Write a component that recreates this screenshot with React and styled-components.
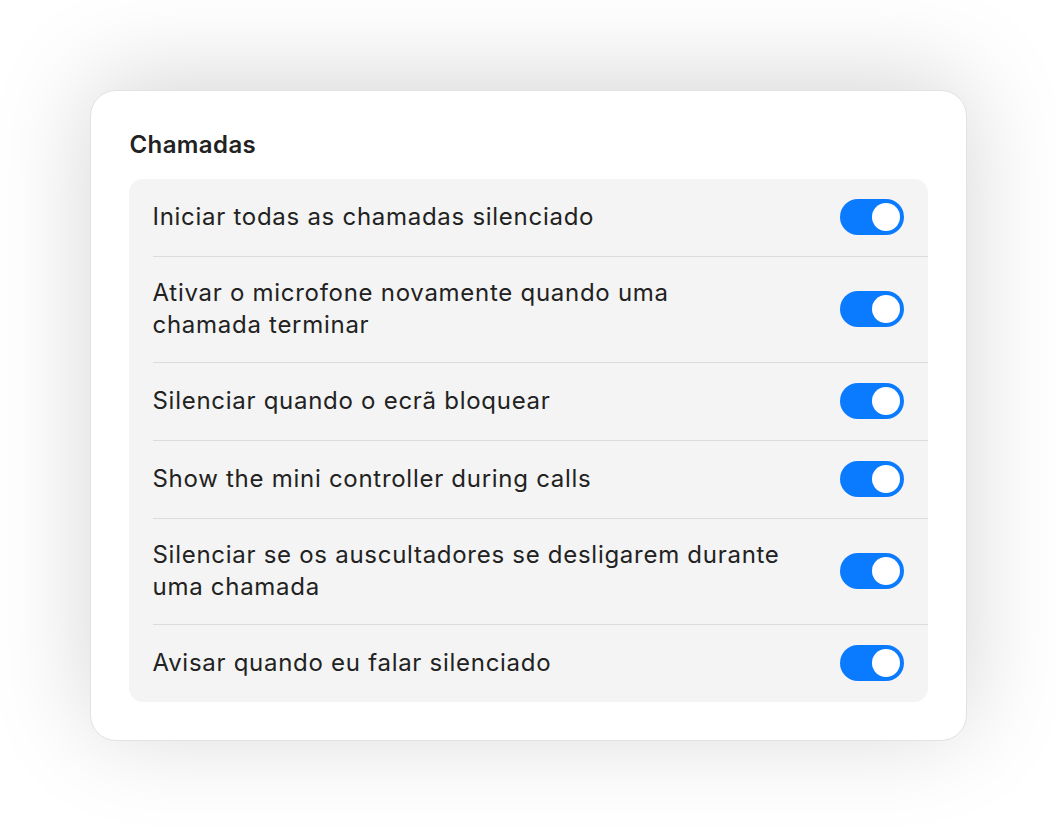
import styled, { createGlobalStyle } from "styled-components";

const Global = createGlobalStyle`
    html, body {
        margin:0;
        padding:0;
        background:#ffffff;
    }
    body {
        font-family: Inter, "Noto Sans", "Liberation Sans", sans-serif;
        -webkit-font-smoothing: antialiased;
    }
`;

const Page = styled.div`
    width:1056px;
    height:830px;
    display:flex;
    align-items:center;
    justify-content:center;
    overflow:hidden;
`;

const Card = styled.div`
    width:877px;
    box-sizing:border-box;
    padding:38px 38px 38px 38px;
    background:#ffffff;
    border:1px solid #e2e2e2;
    border-radius:26px;
    box-shadow: 0 -10px 100px rgba(0,0,0,0.17);
`;

const Title = styled.h2`
    margin:0 0 19px 1px;
    font-size:24px;
    line-height:31px;
    font-weight:600;
    letter-spacing:0.4px;
    color:#222222;
`;

const List = styled.div`
    background:#f4f4f4;
    border-radius:14px;
    display:flex;
    flex-direction:column;
`;

const Row = styled.div`
    margin-left:24px;
    padding:20.5px 24px 20.5px 0;
    display:flex;
    align-items:center;
    justify-content:space-between;
    gap:24px;
    border-top:${p => (p.$first ? "none" : "1px solid #dcdcdc")};
`;

const Label = styled.span`
    display:block;
    font-size:24px;
    line-height:32px;
    color:#222222;
    letter-spacing:0.72px;
`;

const Toggle = styled.div`
    flex:none;
    width:64px;
    height:36px;
    border-radius:18px;
    background:${p => (p.$on ? "#0a7aff" : "#d0d0d0")};
    display:flex;
    align-items:center;
    justify-content:${p => (p.$on ? "flex-end" : "flex-start")};
    padding:0 4px;
    box-sizing:border-box;

    &::after {
        content:"";
        width:28px;
        height:28px;
        border-radius:50%;
        background:#ffffff;
    }
`;

const items = [
    ["Iniciar todas as chamadas silenciado"],
    ["Ativar o microfone novamente quando uma", "chamada terminar"],
    ["Silenciar quando o ecrã bloquear"],
    ["Show the mini controller during calls"],
    ["Silenciar se os auscultadores se desligarem durante", "uma chamada"],
    ["Avisar quando eu falar silenciado"],
];

function App() {
    return (
        <Page>
            <Global />
            <Card>
                <Title>Chamadas</Title>
                <List>
                    {items.map((lines, i) => (
                        <Row key={i} $first={i === 0}>
                            <Label>
                                {lines.map((l, j) => (
                                    <span key={j}>
                                        {j > 0 && <br />}
                                        {l}
                                    </span>
                                ))}
                            </Label>
                            <Toggle $on />
                        </Row>
                    ))}
                </List>
            </Card>
        </Page>
    );
}

export default App;
